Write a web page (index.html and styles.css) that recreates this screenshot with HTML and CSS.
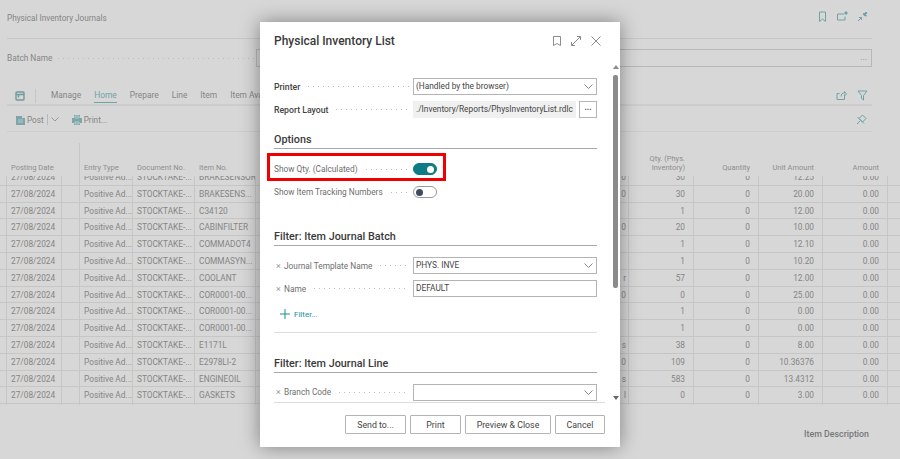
FILE: index.html
```html
<!DOCTYPE html>
<html lang="en">
<head>
    <meta charset="UTF-8">
    <title>Physical Inventory List</title>
    <link rel="stylesheet" href="styles.css">
</head>
<body>

    <!-- journal page behind the dialog -->
    <div class="page">
        <div class="page-title">
            <span>Physical Inventory Journals</span>
            <div class="page-icons">
                <svg width="10" height="12" viewBox="0 0 10 12"><path d="M1.500 1h6v9.500L4.500 8l-3 2.500z"/></svg>
                <svg width="11" height="10" viewBox="0 0 11 10"><path d="M7 3H.5v6H8V5.500"/><path class="solid" d="M8 1h2v2H8z"/></svg>
                <svg width="11" height="11" viewBox="0 0 11 11"><path d="M1 10l3.500-3.500M2 6.500h2.500V9"/><path class="solid" d="M6.500 2l.5 2.500L9.500 5zM9 1l1 1-2 2-1-1z"/></svg>
            </div>
        </div>
        <div class="batch-row">
            <span class="batch-label">Batch Name</span>
            <span class="dots"></span>
            <div class="batch-input">...</div>
        </div>
        <div class="nav-row">
            <svg class="nav-icon" width="10" height="10" viewBox="0 0 10 10"><rect x="1" y="1" width="8" height="8" rx="1"/><path d="M1 3.500h8M3.500 3.500v3"/></svg>
            <span class="nav-sep"></span>
            <span class="nav-item">Manage</span>
            <span class="nav-item nav-active">Home</span>
            <span class="nav-item">Prepare</span>
            <span class="nav-item">Line</span>
            <span class="nav-item">Item</span>
            <span class="nav-item">Item Availability by</span>
            <div class="nav-right">
                <svg width="11" height="11" viewBox="0 0 11 11"><path d="M8.500 6v3.500H1V3.500h2.500M5 6.500C5 4 6.500 3 8.500 3V1.500L10.500 4 8.500 6V4.500"/></svg>
                <svg width="11" height="11" viewBox="0 0 11 11"><path d="M1 1h9L6.500 5.500V10l-2-1.500v-3z"/></svg>
            </div>
        </div>
        <div class="action-row">
            <svg class="action-icon" width="9" height="11" viewBox="0 0 9 11"><path class="fill" d="M0 2h6v2h3v7H0z"/><path class="plus" d="M7.500 0v3M6 1.500h3M2 6h5M2 8h5"/></svg>
            <span>Post</span>
            <span class="action-sep"></span>
            <svg class="action-chev" width="8" height="5" viewBox="0 0 8 5"><path d="M.5.500L4 4 7.500.500"/></svg>
            <svg class="action-icon print-icon" width="10" height="10" viewBox="0 0 10 10"><path class="fill" d="M2 0h6v3h2v5H8v2H2V8H0V3h2z"/><path class="plus" d="M3 1h4v2H3zM3 7h4v2H3z"/></svg>
            <span>Print...</span>
            <svg class="pin-icon" width="11" height="11" viewBox="0 0 11 11"><path d="M1 10l3-3M3 4.500L6.500 1 10 4.500 6.500 8zM1.500 3L8 9.500"/></svg>
        </div>

        <div class="grid-head">
            <div class="cell"></div>
            <div class="cell">Posting Date</div>
            <div class="cell"></div>
            <div class="cell">Entry Type</div>
            <div class="cell">Document No.</div>
            <div class="cell">Item No.</div>
            <div class="cell"></div>
            <div class="cell num">Qty. (Phys.<br>Inventory)</div>
            <div class="cell num">Quantity</div>
            <div class="cell num">Unit Amount</div>
            <div class="cell num">Amount</div>
        </div>
        <div class="grid-clip">
            <div class="grid-rows">
                <div class="row"><div class="cell"></div><div class="cell">27/08/2024</div><div class="cell"></div><div class="cell">Positive Ad...</div><div class="cell">STOCKTAKE-...</div><div class="cell">BRAKESENSOR</div><div class="cell num">0</div><div class="cell num">30</div><div class="cell num">0</div><div class="cell num">12.25</div><div class="cell num">0.00</div></div>
                <div class="row"><div class="cell"></div><div class="cell">27/08/2024</div><div class="cell"></div><div class="cell">Positive Ad...</div><div class="cell">STOCKTAKE-...</div><div class="cell">BRAKESENS...</div><div class="cell num">0</div><div class="cell num">30</div><div class="cell num">0</div><div class="cell num">20.00</div><div class="cell num">0.00</div></div>
                <div class="row"><div class="cell"></div><div class="cell">27/08/2024</div><div class="cell"></div><div class="cell">Positive Ad...</div><div class="cell">STOCKTAKE-...</div><div class="cell">C34120</div><div class="cell num"></div><div class="cell num">1</div><div class="cell num">0</div><div class="cell num">12.00</div><div class="cell num">0.00</div></div>
                <div class="row"><div class="cell"></div><div class="cell">27/08/2024</div><div class="cell"></div><div class="cell">Positive Ad...</div><div class="cell">STOCKTAKE-...</div><div class="cell">CABINFILTER</div><div class="cell num">0</div><div class="cell num">20</div><div class="cell num">0</div><div class="cell num">10.00</div><div class="cell num">0.00</div></div>
                <div class="row"><div class="cell"></div><div class="cell">27/08/2024</div><div class="cell"></div><div class="cell">Positive Ad...</div><div class="cell">STOCKTAKE-...</div><div class="cell">COMMADOT4</div><div class="cell num"></div><div class="cell num">1</div><div class="cell num">0</div><div class="cell num">12.10</div><div class="cell num">0.00</div></div>
                <div class="row"><div class="cell"></div><div class="cell">27/08/2024</div><div class="cell"></div><div class="cell">Positive Ad...</div><div class="cell">STOCKTAKE-...</div><div class="cell">COMMASYN...</div><div class="cell num"></div><div class="cell num">1</div><div class="cell num">0</div><div class="cell num">10.20</div><div class="cell num">0.00</div></div>
                <div class="row"><div class="cell"></div><div class="cell">27/08/2024</div><div class="cell"></div><div class="cell">Positive Ad...</div><div class="cell">STOCKTAKE-...</div><div class="cell">COOLANT</div><div class="cell num">r</div><div class="cell num">57</div><div class="cell num">0</div><div class="cell num">12.00</div><div class="cell num">0.00</div></div>
                <div class="row"><div class="cell"></div><div class="cell">27/08/2024</div><div class="cell"></div><div class="cell">Positive Ad...</div><div class="cell">STOCKTAKE-...</div><div class="cell">COR0001-00...</div><div class="cell num">0</div><div class="cell num">0</div><div class="cell num">0</div><div class="cell num">25.00</div><div class="cell num">0.00</div></div>
                <div class="row"><div class="cell"></div><div class="cell">27/08/2024</div><div class="cell"></div><div class="cell">Positive Ad...</div><div class="cell">STOCKTAKE-...</div><div class="cell">COR0001-00...</div><div class="cell num"></div><div class="cell num">1</div><div class="cell num">0</div><div class="cell num">0.00</div><div class="cell num">0.00</div></div>
                <div class="row"><div class="cell"></div><div class="cell">27/08/2024</div><div class="cell"></div><div class="cell">Positive Ad...</div><div class="cell">STOCKTAKE-...</div><div class="cell">COR0001-00...</div><div class="cell num"></div><div class="cell num">1</div><div class="cell num">0</div><div class="cell num">0.00</div><div class="cell num">0.00</div></div>
                <div class="row"><div class="cell"></div><div class="cell">27/08/2024</div><div class="cell"></div><div class="cell">Positive Ad...</div><div class="cell">STOCKTAKE-...</div><div class="cell">E1171L</div><div class="cell num">s</div><div class="cell num">38</div><div class="cell num">0</div><div class="cell num">8.00</div><div class="cell num">0.00</div></div>
                <div class="row"><div class="cell"></div><div class="cell">27/08/2024</div><div class="cell"></div><div class="cell">Positive Ad...</div><div class="cell">STOCKTAKE-...</div><div class="cell">E2978LI-2</div><div class="cell num">0</div><div class="cell num">109</div><div class="cell num">0</div><div class="cell num">10.36376</div><div class="cell num">0.00</div></div>
                <div class="row"><div class="cell"></div><div class="cell">27/08/2024</div><div class="cell"></div><div class="cell">Positive Ad...</div><div class="cell">STOCKTAKE-...</div><div class="cell">ENGINEOIL</div><div class="cell num">s</div><div class="cell num">583</div><div class="cell num">0</div><div class="cell num">13.4312</div><div class="cell num">0.00</div></div>
                <div class="row"><div class="cell"></div><div class="cell">27/08/2024</div><div class="cell"></div><div class="cell">Positive Ad...</div><div class="cell">STOCKTAKE-...</div><div class="cell">GASKETS</div><div class="cell num">l</div><div class="cell num">0</div><div class="cell num">0</div><div class="cell num">3.00</div><div class="cell num">0.00</div></div>
                <div class="row row-end"><div class="cell"></div><div class="cell"></div><div class="cell"></div><div class="cell"></div><div class="cell"></div><div class="cell"></div><div class="cell"></div><div class="cell"></div><div class="cell"></div><div class="cell"></div><div class="cell"></div></div>
            </div>
        </div>
        <div class="item-desc">Item Description</div>
    </div>

    <!-- request page dialog -->
    <div class="dialog">
        <div class="dialog-head">
            <h2>Physical Inventory List</h2>
            <div class="dialog-icons">
                <svg width="8" height="10" viewBox="0 0 8 10"><path d="M.5.500h7v9L4 7.500.5 9.500z"/></svg>
                <svg width="10" height="10" viewBox="0 0 10 10"><path d="M.5 9.500l9-9M6 .5h3.500V4M.5 6v3.500H4"/></svg>
                <svg width="10" height="10" viewBox="0 0 10 10"><path d="M.5.500l9 9M9.500.500l-9 9"/></svg>
            </div>
        </div>

        <div class="dialog-body">
            <div class="field">
                <label class="strong">Printer</label><span class="dots"></span>
                <div class="input select">(Handled by the browser)
                    <svg class="chev" width="9" height="5" viewBox="0 0 9 5"><path d="M.5.500L4.500 4.500 8.500.500"/></svg>
                </div>
            </div>
            <div class="field">
                <label class="strong">Report Layout</label><span class="dots"></span>
                <div class="input readonly">./Inventory/Reports/PhysInventoryList.rdlc</div>
                <div class="more-btn">...</div>
            </div>

            <h3 class="options-head">Options</h3>
            <div class="field first-toggle">
                <label>Show Qty. (Calculated)</label><span class="dots"></span>
                <div class="toggle on"><span></span></div>
            </div>
            <div class="field">
                <label>Show Item Tracking Numbers</label><span class="dots"></span>
                <div class="toggle"><span></span></div>
            </div>

            <h3 class="batch-head">Filter: Item Journal Batch</h3>
            <div class="field first-filter">
                <span class="x">×</span><label>Journal Template Name</label><span class="dots"></span>
                <div class="input select">PHYS. INVE
                    <svg class="chev" width="9" height="5" viewBox="0 0 9 5"><path d="M.5.500L4.500 4.500 8.500.500"/></svg>
                </div>
            </div>
            <div class="field">
                <span class="x">×</span><label>Name</label><span class="dots"></span>
                <div class="input">DEFAULT</div>
            </div>
            <div class="add-filter">
                <svg width="10" height="10" viewBox="0 0 10 10"><path d="M5 0v10M0 5h10"/></svg>
                <span>Filter...</span>
            </div>
            <div class="divider"></div>

            <h3 class="line-head">Filter: Item Journal Line</h3>
            <div class="field first-line">
                <span class="x">×</span><label>Branch Code</label><span class="dots"></span>
                <div class="input select">
                    <svg class="chev" width="9" height="5" viewBox="0 0 9 5"><path d="M.5.500L4.500 4.500 8.500.500"/></svg>
                </div>
            </div>
        </div>

        <div class="dialog-foot">
            <button class="btn btn-send">Send to...</button>
            <button class="btn btn-print">Print</button>
            <button class="btn btn-preview">Preview &amp; Close</button>
            <button class="btn btn-cancel">Cancel</button>
        </div>

        <div class="scrollbar">
            <span class="arrow up"></span>
            <span class="thumb"></span>
            <span class="arrow down"></span>
        </div>
        <!-- red annotation box on the screenshot -->
        <div class="highlight"></div>
    </div>

</body>
</html>
```

FILE: styles.css
```css
:root {
    --page-bg: #d7d7d7;
    --page-text: #858585;
    --page-line: #c6c6c6;
    --teal-dim: #6fa3a6;
    --teal: #0f7c85;
    --dialog-text: #3a3a3a;
    --label-text: #6e6e6e;
    --input-border: #b4b4b4;
    --grid-cols: 7px 55px 18px 53px 62px 61px 373px 65px 65px 64px 65px 12px;
}

* {
    box-sizing: border-box;
    margin: 0;
    padding: 0;
}

body {
    width: 900px;
    height: 459px;
    overflow: hidden;
    position: relative;
    background-color: var(--page-bg);
    font-family: Roboto, "Open Sans", sans-serif;
    font-size: 8.500px;
}

svg {
    display: block;
    fill: none;
    stroke-width: 1;
}

/* ---- page behind ---- */
.page {
    color: var(--page-text);
}

.page-title {
    height: 39px;
    margin: 0 28px 0 7px;
    padding-top: 12px;
    border-bottom: 1px solid var(--page-line);
    display: flex;
    justify-content: space-between;
    line-height: 12px;
    font-size: 8.200px;
}

.page-icons {
    display: flex;
    gap: 9px;
    align-items: flex-start;
    padding-right: 4px;
    margin-top: -1px;
}

.page-icons svg,
.nav-right svg,
.pin-icon {
    stroke: var(--teal-dim);
}

.page-icons .solid {
    fill: var(--teal-dim);
}

.batch-row {
    height: 28px;
    margin: 10px 28px 0 7px;
    display: flex;
    align-items: flex-start;
}

.batch-label {
    font-size: 8.300px;
    line-height: 18px;
    white-space: nowrap;
    margin-right: 4px;
}

.batch-row .dots {
    flex: 0 0 200px;
    margin: 9px 0 0;
}

.batch-input {
    flex: 1;
    height: 18px;
    border: 1px solid #b8b8b8;
    text-align: right;
    padding-right: 4px;
    line-height: 14px;
}

.nav-row {
    height: 29px;
    margin: 0 28px 0 7px;
    padding-top: 10px;
    border-bottom: 2px solid #cdcdcd;
    display: flex;
    align-items: center;
    gap: 13px;
    font-size: 8.400px;
}

.nav-icon {
    stroke: #6f9a9e;
    stroke-width: 1.400;
    margin-left: 8px;
    margin-right: -3px;
}

.nav-sep {
    width: 1px;
    height: 14px;
    margin-right: 2px;
    background-color: var(--page-line);
}

.nav-item {
    white-space: nowrap;
    line-height: 13px;
}

.nav-active {
    color: var(--teal-dim);
    border-bottom: 1px solid var(--teal-dim);
}

.nav-right {
    margin-left: auto;
    display: flex;
    gap: 10px;
    padding-right: 4px;
}

.action-row {
    height: 26px;
    margin: 0 28px 0 7px;
    padding: 2px 0 0 9px;
    border-bottom: 1px solid #cdcdcd;
    display: flex;
    align-items: center;
    font-size: 8.200px;
}

.action-icon .fill {
    fill: #7ea6a9;
}

.action-icon .plus {
    stroke: #c4d4d5;
    stroke-width: 0.800;
}

.action-row > span {
    margin-left: 2px;
}

.action-row .action-sep {
    width: 1px;
    height: 11px;
    margin-left: 3px;
    background-color: #b9b9b9;
}

.action-chev {
    stroke: #999;
    margin: 0 13px 0 3px;
}

.pin-icon {
    margin-left: auto;
    margin-right: 5px;
}

.grid-head {
    height: 44px;
    display: grid;
    grid-template-columns: var(--grid-cols);
    font-size: 7.500px;
    line-height: 9px;
    color: #8e8e8e;
}

.grid-head .cell {
    padding: 0 9px 4px 4px;
    align-self: end;
    white-space: nowrap;
}

.grid-head .cell:nth-child(3) {
    align-self: stretch;
    margin-top: 11px;
    border-right: 1px solid var(--page-line);
}

.grid-clip {
    height: 229px;
    overflow: hidden;
}

.grid-rows {
    margin-top: -7px;
}

.row {
    height: 16.800px;
    display: grid;
    grid-template-columns: var(--grid-cols);
    grid-auto-rows: 15.800px;
    border-bottom: 1px solid var(--page-line);
    font-size: 8.300px;
    line-height: 17.800px;
    white-space: nowrap;
}

.row-end {
    border-bottom: 0;
}

.row .cell {
    border-right: 1px solid var(--page-line);
    padding-left: 4px;
    overflow: hidden;
}

.num {
    text-align: right;
    padding-right: 8px;
}

.row .cell:nth-child(7) {
    padding-right: 2px;
}

.item-desc {
    margin: 0 31px 0 0;
    padding-top: 24px;
    text-align: right;
    font-size: 8.800px;
    font-weight: 500;
    color: #777;
}

/* ---- dialog ---- */
.dialog {
    position: absolute;
    left: 260px;
    top: 22px;
    width: 360px;
    height: 425px;
    background-color: #fff;
    box-shadow: 0 0 18px rgba(0, 0, 0, 0.4);
    color: var(--dialog-text);
}

.dialog-head {
    height: 46px;
    padding: 11px 19px 0 14px;
    display: flex;
    justify-content: space-between;
}

.dialog-head h2 {
    font-size: 12px;
    font-weight: 500;
    line-height: 16px;
}

.dialog-icons {
    display: flex;
    gap: 10px;
    padding-top: 3px;
}

.dialog-icons svg {
    stroke: #8c8c8c;
}

.dialog-body {
    height: 335px;
    margin: 0 15px 0 14px;
    padding-top: 10px;
    border-bottom: 1px solid #dcdcdc;
    overflow: hidden;
}

.field {
    width: 323px;
    height: 17px;
    margin-bottom: 6px;
    display: flex;
    align-items: center;
    font-size: 8.300px;
    color: var(--label-text);
}

.field label {
    white-space: nowrap;
}

.field .strong {
    font-size: 8.700px;
    color: #444;
    font-weight: 500;
}

.x {
    width: 10px;
    padding-left: 2px;
    color: #999;
    font-size: 9px;
    line-height: 10px;
}

.dots {
    flex: 1;
    height: 1px;
    margin: 0 4px 0 6px;
    background-image: radial-gradient(circle, #bcbcbc 0.6px, transparent 0.7px);
    background-size: 5px 1px;
}

.input {
    flex: 0 0 184px;
    min-width: 0;
    height: 17px;
    border: 1px solid var(--input-border);
    padding-left: 2px;
    font-size: 8.300px;
    line-height: 15px;
    color: #444;
    position: relative;
    white-space: nowrap;
    overflow: hidden;
}

.chev {
    position: absolute;
    right: 3px;
    top: 5px;
    stroke: #888;
}

.input.readonly {
    flex: 0 0 163px;
    background-color: #f0f0f0;
    border-color: #f0f0f0;
}

.more-btn {
    flex: 0 0 18px;
    height: 17px;
    margin-left: 3px;
    border: 1px solid var(--input-border);
    text-align: center;
    line-height: 11px;
    font-weight: 700;
    color: #555;
}

h3 {
    width: 323px;
    height: 18px;
    border-bottom: 1px solid #a3a9b3;
    font-size: 10.800px;
    font-weight: 500;
    line-height: 17px;
}

.options-head {
    margin-top: 12.500px;
}

.first-toggle {
    margin-top: 12px;
}

.batch-head {
    margin-top: 27px;
}

.first-filter {
    margin-top: 11.500px;
}

.line-head {
    margin-top: 22px;
}

.first-line {
    margin-top: 10.500px;
}

.toggle {
    width: 24px;
    height: 12px;
    margin-right: 160px;
    border: 1px solid #9a9a9a;
    border-radius: 6px;
    display: flex;
    align-items: center;
    padding: 0 2px;
    background-color: #fff;
}

.toggle span {
    width: 7px;
    height: 7px;
    border-radius: 50%;
    background-color: #3d4a60;
}

.toggle.on {
    background-color: var(--teal);
    border-color: var(--teal);
    justify-content: flex-end;
}

.toggle.on span {
    background-color: #fff;
}

.add-filter {
    height: 17px;
    margin-top: 8.500px;
    padding-left: 6px;
    display: flex;
    align-items: center;
    gap: 4px;
    font-size: 8px;
    color: #1b8f98;
}

.add-filter svg {
    stroke: #1b8f98;
}

.divider {
    width: 323px;
    height: 1px;
    margin-top: 9.500px;
    background-color: #dedede;
}

.dialog-foot {
    display: flex;
    margin: 12px 15px 0 0;
    justify-content: flex-end;
}

.btn {
    height: 19px;
    border: 1px solid #b4b4b4;
    border-radius: 1px;
    background-color: #fff;
    font-family: inherit;
    font-size: 8.800px;
    color: #444;
}

.btn-send {
    width: 61px;
    margin-right: 4px;
}

.btn-print {
    width: 51px;
    margin-right: 4px;
}

.btn-preview {
    width: 86px;
    margin-right: 4px;
}

.btn-cancel {
    width: 50px;
}

.scrollbar {
    position: absolute;
    left: 352px;
    top: 42px;
    width: 7px;
    height: 336px;
    display: flex;
    flex-direction: column;
    align-items: center;
}

.thumb {
    width: 5px;
    height: 213px;
    margin-top: 6px;
    background-color: #8b8b8b;
    border-radius: 2px;
}

.arrow {
    width: 0;
    height: 0;
    border-left: 3px solid transparent;
    border-right: 3px solid transparent;
}

.arrow.up {
    margin-top: 1px;
    border-bottom: 4px solid #8b8b8b;
}

.arrow.down {
    margin-top: auto;
    border-top: 4px solid #666;
}

.highlight {
    position: absolute;
    left: 7px;
    top: 131px;
    width: 179px;
    height: 28px;
    border: 3px solid #f00000;
}
```
